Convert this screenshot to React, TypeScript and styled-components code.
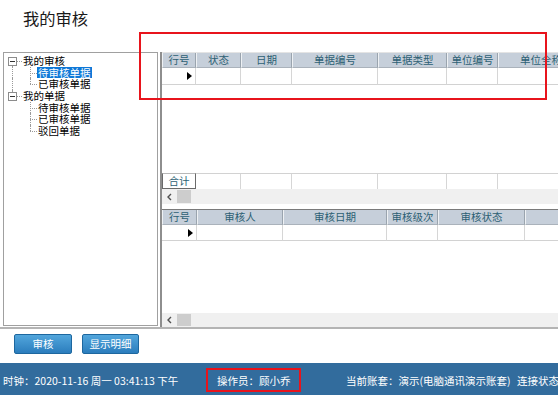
import React from 'react';
import styled, { createGlobalStyle } from 'styled-components';

const GlobalStyle = createGlobalStyle`
  html, body { margin: 0; padding: 0; background: #fff; }
  body { font-family: "Noto Sans CJK SC", "Noto Sans", sans-serif; }
`;

const Page = styled.div`
  position: relative;
  width: 558px;
  height: 395px;
  overflow: hidden;
  display: flex;
  flex-direction: column;
  background: #fff;
  font-size: 10.5px;
  color: #000;
`;

const TitleBar = styled.div`
  height: 52px;
  box-sizing: border-box;
  padding: 7px 0 0 23px;
  font-size: 16.3px;
  line-height: 22px;
  color: #1a1a1a;
`;

const Main = styled.div`
  height: 275px;
  display: flex;
`;

/* ---------- tree ---------- */
const TreePanel = styled.div`
  margin-left: 3px;
  width: 155px;
  height: 274px;
  box-sizing: border-box;
  border: 1px solid #a0a0a0;
  padding-top: 2px;
  flex: 0 0 auto;
`;

const TreeRow = styled.div`
  display: flex;
  height: 11.7px;
  line-height: 11.7px;
  white-space: nowrap;
`;

type VMode = 'full' | 'top' | 'bottom' | 'none';

const Lane = styled.div<{ $w: number; $x: number; $v: VMode; $h?: boolean; $hFrom?: number }>`
  position: relative;
  flex: 0 0 ${p => p.$w}px;
  &::before {
    content: '';
    display: ${p => (p.$v === 'none' ? 'none' : 'block')};
    position: absolute;
    left: ${p => p.$x}px;
    top: ${p => (p.$v === 'bottom' ? '50%' : '0')};
    bottom: ${p => (p.$v === 'top' ? '50%' : '0')};
    border-left: 1px dotted #9a9a9a;
  }
  &::after {
    content: '';
    display: ${p => (p.$h ? 'block' : 'none')};
    position: absolute;
    left: ${p => p.$hFrom ?? p.$x}px;
    right: 0;
    top: 50%;
    border-top: 1px dotted #9a9a9a;
  }
`;

const ExpandBox = styled.span`
  position: absolute;
  left: 4px;
  top: 1.5px;
  width: 9px;
  height: 9px;
  box-sizing: border-box;
  border: 1px solid #8c8c8c;
  background: #fff;
  z-index: 1;
  &::after {
    content: '';
    position: absolute;
    left: 1px;
    right: 1px;
    top: 3px;
    border-top: 1px solid #333;
  }
`;

const NodeText = styled.span<{ $selected?: boolean }>`
  display: inline-block;
  height: 11.7px;
  line-height: 11.7px;
  padding: 0 1px;
  background: ${p => (p.$selected ? '#0f78d7' : 'transparent')};
  color: ${p => (p.$selected ? '#fff' : '#000')};
`;

type Node = { label: string; children: { label: string; selected?: boolean }[] };

const treeData: Node[] = [
  { label: '我的审核', children: [{ label: '待审核单据', selected: true }, { label: '已审核单据' }] },
  { label: '我的单据', children: [{ label: '待审核单据' }, { label: '已审核单据' }, { label: '驳回单据' }] },
];

const Tree: React.FC = () => (
  <TreePanel>
    {treeData.map((node, i) => {
      const isLast = i === treeData.length - 1;
      const topMode: VMode = i === 0 ? (isLast ? 'none' : 'bottom') : isLast ? 'top' : 'full';
      return (
        <React.Fragment key={i}>
          <TreeRow>
            <Lane $w={18} $x={8} $v={topMode} $h $hFrom={13}>
              <ExpandBox />
            </Lane>
            <NodeText>{node.label}</NodeText>
          </TreeRow>
          {node.children.map((c, j) => (
            <TreeRow key={j}>
              <Lane $w={17} $x={8} $v={isLast ? 'none' : 'full'} />
              <Lane $w={16} $x={9} $v={j === node.children.length - 1 ? 'top' : 'full'} $h />
              <NodeText $selected={c.selected}>{c.label}</NodeText>
            </TreeRow>
          ))}
        </React.Fragment>
      );
    })}
  </TreePanel>
);

/* ---------- grids ---------- */
const RightPanel = styled.div`
  margin-left: 2px;
  flex: 1;
  min-width: 0;
  display: flex;
  flex-direction: column;
  border-left: 2px solid #8e8e8e;
  overflow: hidden;
`;

const GridBox = styled.div<{ $h: number; $top: string }>`
  height: ${p => p.$h}px;
  box-sizing: border-box;
  border-top: 1px solid ${p => p.$top};
  display: flex;
  flex-direction: column;
  overflow: hidden;
`;

const Row = styled.div<{ $h: number }>`
  display: flex;
  flex: 0 0 ${p => p.$h}px;
  height: ${p => p.$h}px;
`;

const HeadCell = styled.div<{ $w: number }>`
  flex: 0 0 ${p => p.$w}px;
  box-sizing: border-box;
  background: #c6cfda;
  border-left: 1px solid #eef1f4;
  border-right: 1px solid #9aa4ae;
  border-bottom: 1px solid #aab2bb;
  color: #2d5f74;
  text-align: center;
  white-space: nowrap;
  overflow: hidden;
  line-height: 14px;
`;

const Cell = styled.div<{ $w: number }>`
  flex: 0 0 ${p => p.$w}px;
  box-sizing: border-box;
  border-right: 1px solid #d6d6d6;
  border-bottom: 1px solid #d2d2d2;
  background: #fff;
  display: flex;
  align-items: center;
  justify-content: flex-end;
  padding-right: 3px;
`;

const Indicator = styled.span`
  width: 0;
  height: 0;
  border-top: 4.5px solid transparent;
  border-bottom: 4.5px solid transparent;
  border-left: 5px solid #000;
`;

const Filler = styled.div`
  flex: 1;
  background: #fff;
`;

const SumRow = styled.div`
  display: flex;
  flex: 0 0 16px;
  border-top: 1px solid #d2d2d2;
  box-sizing: border-box;
`;

const SumLabel = styled.div<{ $w: number }>`
  flex: 0 0 ${p => p.$w}px;
  box-sizing: border-box;
  border: 1px solid #6a6a6a;
  border-top-color: #b8b8b8;
  margin-top: -1px;
  color: #2d5f74;
  text-align: center;
  line-height: 14px;
`;

const SumCell = styled.div<{ $w: number }>`
  flex: 0 0 ${p => p.$w}px;
  box-sizing: border-box;
  border-right: 1px solid #d6d6d6;
`;

const ScrollBar = styled.div<{ $h: number }>`
  flex: 0 0 ${p => p.$h}px;
  background: #f0f0f0;
  display: flex;
  align-items: center;
  padding-left: 5px;
  gap: 5px;
`;

const Thumb = styled.div`
  width: 14px;
  align-self: stretch;
  margin: 1px 0;
  background: #cdcdcd;
`;

const Gap = styled.div`
  flex: 0 0 5px;
  background: #fff;
`;

const Chevron = () => (
  <svg width="5" height="8" viewBox="0 0 5 8">
    <polyline points="4,1 1,4 4,7" fill="none" stroke="#505050" strokeWidth="1.4" />
  </svg>
);

const topCols = [
  { t: '行号', w: 34 },
  { t: '状态', w: 45 },
  { t: '日期', w: 51 },
  { t: '单据编号', w: 86 },
  { t: '单据类型', w: 69 },
  { t: '单位编号', w: 51 },
  { t: '单位全称', w: 86 },
];

const bottomCols = [
  { t: '行号', w: 35 },
  { t: '审核人', w: 86 },
  { t: '审核日期', w: 104 },
  { t: '审核级次', w: 51 },
  { t: '审核状态', w: 87 },
  { t: '', w: 80 },
];

type Col = { t: string; w: number };

const DataGrid: React.FC<{ cols: Col[]; rowH: number }> = ({ cols, rowH }) => (
  <>
    <Row $h={15}>
      {cols.map((c, i) => (
        <HeadCell key={i} $w={c.w}>{c.t}</HeadCell>
      ))}
    </Row>
    <Row $h={rowH}>
      {cols.map((c, i) => (
        <Cell key={i} $w={c.w}>{i === 0 && <Indicator />}</Cell>
      ))}
    </Row>
  </>
);

/* ---------- bottom area ---------- */
const Separator = styled.div`
  height: 2px;
  background: #b4b4b4;
`;

const ButtonBar = styled.div`
  height: 34px;
  box-sizing: border-box;
  padding: 5px 0 0 14px;
  display: flex;
  gap: 10px;
  align-items: flex-start;
`;

const Button = styled.button<{ $w: number }>`
  width: ${p => p.$w}px;
  height: 20px;
  padding: 0;
  border: 1px solid #1d679f;
  border-radius: 2px;
  background: linear-gradient(#52a6dc, #2b7dbd);
  color: #fff;
  font-family: inherit;
  font-size: 10.5px;
  line-height: 18px;
`;

const StatusBar = styled.div`
  height: 32px;
  background: #326c9d;
  color: #fff;
  display: flex;
  align-items: center;
  padding: 3px 0 0 3px;
  box-sizing: border-box;
  font-size: 10.5px;
  white-space: nowrap;
  overflow: hidden;
`;

const StatusItem = styled.span<{ $w?: number }>`
  flex: 0 0 ${p => (p.$w ? `${p.$w}px` : 'auto')};
`;

const Annotation = styled.div`
  position: absolute;
  border: 2px solid #e8141c;
  box-sizing: border-box;
  pointer-events: none;
`;

export default function App() {
  return (
    <Page>
      <GlobalStyle />
      <TitleBar>我的审核</TitleBar>
      <Main>
        <Tree />
        <RightPanel>
          <GridBox $h={152} $top="#e4e4e4">
            <DataGrid cols={topCols} rowH={17} />
            <Filler />
            <SumRow>
              <SumLabel $w={topCols[0].w}>合计</SumLabel>
              {topCols.slice(1).map((c, i) => (
                <SumCell key={i} $w={c.w} />
              ))}
            </SumRow>
            <ScrollBar $h={15}>
              <Chevron />
              <Thumb />
            </ScrollBar>
          </GridBox>
          <Gap />
          <GridBox $h={118} $top="#7a7a7a">
            <DataGrid cols={bottomCols} rowH={16} />
            <Filler />
            <ScrollBar $h={14}>
              <Chevron />
              <Thumb />
            </ScrollBar>
          </GridBox>
        </RightPanel>
      </Main>
      <Separator />
      <ButtonBar>
        <Button $w={58}>审核</Button>
        <Button $w={57}>显示明细</Button>
      </ButtonBar>
      <StatusBar>
        <StatusItem $w={214}>时钟：2020-11-16 周一 03:41:13 下午</StatusItem>
        <StatusItem $w={129}>操作员：顾小乔</StatusItem>
        <StatusItem $w={171}>当前账套：演示(电脑通讯演示账套)</StatusItem>
        <StatusItem>连接状态</StatusItem>
      </StatusBar>
      <Annotation style={{ left: 139, top: 32, width: 408, height: 68 }} />
      <Annotation style={{ left: 206, top: 368, width: 95, height: 24 }} />
    </Page>
  );
}
